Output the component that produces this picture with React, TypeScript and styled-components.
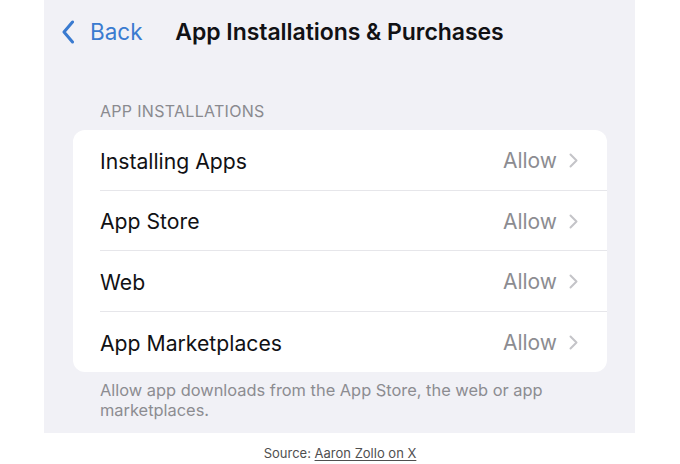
import React from "react";
import styled, { createGlobalStyle } from "styled-components";

const Global = createGlobalStyle`
  html, body { margin: 0; padding: 0; background: #ffffff; }
  body { font-family: Inter, "Noto Sans", sans-serif; -webkit-font-smoothing: antialiased; }
`;

const Page = styled.div`
  width: 680px;
  height: 464px;
  display: flex;
  flex-direction: column;
  align-items: flex-start;
`;

const Screen = styled.div`
  margin-left: 44px;
  width: 591px;
  height: 433px;
  background: #f1f1f6;
  display: flex;
  flex-direction: column;
  box-sizing: border-box;
`;

const NavBar = styled.div`
  height: 63px;
  display: grid;
  grid-template-columns: 1fr auto 1fr;
  align-items: center;
`;

const BackButton = styled.div`
  display: flex;
  align-items: center;
  gap: 16px;
  padding-left: 18px;
  color: #3a7bd0;
  font-size: 22.5px;
`;

const Title = styled.div`
  font-size: 23px;
  font-weight: 600;
  color: #111114;
  letter-spacing: -0.05px;
`;

const SectionHeader = styled.div`
  margin: 39px 0 0 56px;
  font-size: 16px;
  color: #8a8a8f;
  letter-spacing: 0.3px;
  line-height: 18px;
`;

const Card = styled.div`
  margin: 10px 28px 0 29px;
  background: #ffffff;
  border-radius: 12px;
  overflow: hidden;
`;

const Row = styled.div<{ $last?: boolean }>`
  height: 60.5px;
  margin-left: 27px;
  display: flex;
  align-items: center;
  padding: 2px 29px 0 0;
  box-sizing: border-box;
  border-bottom: ${(p) => (p.$last ? "none" : "1.5px solid #e6e6ea")};
`;

const Label = styled.div`
  flex: 1;
  font-size: 21.2px;
  color: #111114;
`;

const Value = styled.div`
  font-size: 21px;
  color: #8c8c91;
  margin-right: 12px;
`;

const Footer = styled.div`
  margin: 9px 40px 0 56px;
  font-size: 16.4px;
  line-height: 19.5px;
  color: #8c8c91;
`;

const Caption = styled.div`
  width: 100%;
  margin-top: 12px;
  text-align: center;
  font-size: 13px;
  color: #4f4f4f;
  a { color: #4f4f4f; text-decoration: underline; text-underline-offset: 2px; }
`;

const RowChevron = () => (
  <svg width="9" height="15" viewBox="0 0 9 15" fill="none">
    <path d="M1.5 1.5 L7.5 7.5 L1.5 13.5" stroke="#c4c4c8" strokeWidth="2" strokeLinecap="round" strokeLinejoin="round" />
  </svg>
);

const BackChevron = () => (
  <svg width="12" height="24" viewBox="0 0 12 24" fill="none">
    <path d="M10.5 2 L2 12 L10.5 22" stroke="#3a7bd0" strokeWidth="3" strokeLinecap="round" strokeLinejoin="round" />
  </svg>
);

const rows = ["Installing Apps", "App Store", "Web", "App Marketplaces"];

export default function App() {
  return (
    <>
      <Global />
      <Page>
        <Screen>
          <NavBar>
            <BackButton>
              <BackChevron />
              <span>Back</span>
            </BackButton>
            <Title>App Installations &amp; Purchases</Title>
            <div />
          </NavBar>
          <SectionHeader>APP INSTALLATIONS</SectionHeader>
          <Card>
            {rows.map((r, i) => (
              <Row key={r} $last={i === rows.length - 1}>
                <Label>{r}</Label>
                <Value>Allow</Value>
                <RowChevron />
              </Row>
            ))}
          </Card>
          <Footer>Allow app downloads from the App Store, the web or app marketplaces.</Footer>
        </Screen>
        <Caption>
          Source: <a>Aaron Zollo on X</a>
        </Caption>
      </Page>
    </>
  );
}
